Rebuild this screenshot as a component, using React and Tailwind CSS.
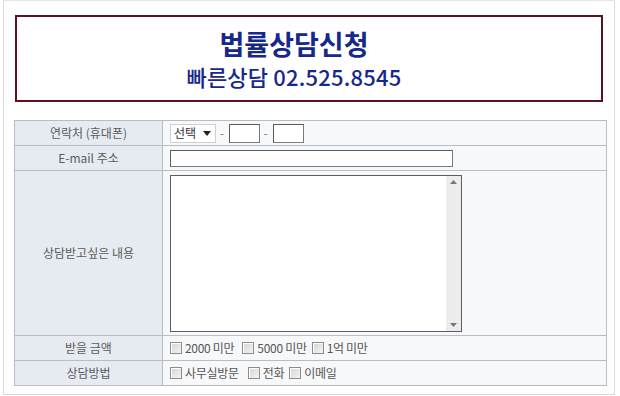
import React from 'react';

const font = { fontFamily: '"Noto Sans CJK KR", "Noto Sans", sans-serif' };

const Check = ({ label, className = '' }) => (
  <label className={`flex items-center gap-[3px] ${className}`}>
    <span className="inline-block w-[12px] h-[12px] border border-[#8c8c8c] bg-gradient-to-br from-[#d4d4d4] to-[#f4f4f4] shadow-[inset_1px_1px_0_#fff]" />
    <span className="text-[12px] text-[#555] leading-none tracking-[-0.3px]">{label}</span>
  </label>
);

const Field = ({ w, h }) => (
  <span
    className={`inline-block ${w} ${h} bg-white border border-[#7a7a7a] border-t-[#5a5a5a] border-l-[#5a5a5a]`}
  />
);

const Label = ({ children }) => (
  <td className="w-[148px] bg-[#e6eaf1] border border-[#b4bdc8] text-center text-[12px] text-[#5c5c5c] align-middle">
    {children}
  </td>
);

export default function App() {
  return (
    <div className="w-[620px] h-[396px] bg-white overflow-hidden" style={font}>
      <div className="ml-[3px] w-[612px] h-[395px] border border-[#dadada] border-t-[#e6e6e6]">
        {/* Header */}
        <div className="ml-[11px] mt-[14px] w-[588px] h-[87px] border-2 border-[#5a1220] flex flex-col items-center justify-center pr-[30px]">
          <div className="text-[27px] font-semibold text-[#17288c] leading-[34px] mt-[1px]">법률상담신청</div>
          <div className="text-[22px] font-medium text-[#17288c] leading-[30px] tracking-[0.2px]">빠른상담 02.525.8545</div>
        </div>

        {/* Form table */}
        <table className="ml-[10px] mt-[18px] w-[593px] border-collapse border border-[#a9b3bf]">
          <tbody>
            <tr className="h-[25px]">
              <Label>연락처 (휴대폰)</Label>
              <td className="bg-[#f7f8fa] border border-[#b4bdc8] pl-[7px]">
                <div className="flex items-center">
                  <div className="w-[46px] h-[19px] bg-white border border-[#cfcfcf] flex items-center justify-between pl-[3px] pr-[4px]">
                    <span className="text-[12px] text-[#333] leading-none">선택</span>
                    <svg width="8" height="5" viewBox="0 0 8 5">
                      <path d="M0 0h8L4 5z" fill="#222" />
                    </svg>
                  </div>
                  <span className="ml-[4px] mr-[5px] text-[11px] text-[#666]">-</span>
                  <Field w="w-[31px]" h="h-[19px]" />
                  <span className="ml-[4px] mr-[5px] text-[11px] text-[#666]">-</span>
                  <Field w="w-[31px]" h="h-[19px]" />
                </div>
              </td>
            </tr>
            <tr className="h-[25px]">
              <Label>E-mail 주소</Label>
              <td className="bg-[#f7f8fa] border border-[#b4bdc8] pl-[7px]">
                <div className="flex items-center">
                  <Field w="w-[283px]" h="h-[17px]" />
                </div>
              </td>
            </tr>
            <tr className="h-[165px]">
              <Label>상담받고싶은 내용</Label>
              <td className="bg-[#f7f8fa] border border-[#b4bdc8] pl-[7px]">
                <div className="w-[292px] h-[157px] bg-white border border-[#5e5e5e] flex justify-end">
                  <div className="w-[15px] h-full bg-[#ececec] flex flex-col items-center justify-between py-[4px]">
                    <svg width="7" height="4" viewBox="0 0 7 4">
                      <path d="M0 4L3.5 0L7 4z" fill="#777" />
                    </svg>
                    <svg width="7" height="4" viewBox="0 0 7 4">
                      <path d="M0 0h7L3.5 4z" fill="#777" />
                    </svg>
                  </div>
                </div>
              </td>
            </tr>
            <tr className="h-[25px]">
              <Label>받을 금액</Label>
              <td className="bg-[#f7f8fa] border border-[#b4bdc8] pl-[7px]">
                <div className="flex items-center">
                  <Check label="2000 미만" className="mr-[8px]" />
                  <Check label="5000 미만" className="mr-[5px]" />
                  <Check label="1억 미만" />
                </div>
              </td>
            </tr>
            <tr className="h-[25px]">
              <Label>상담방법</Label>
              <td className="bg-[#f7f8fa] border border-[#b4bdc8] pl-[7px]">
                <div className="flex items-center">
                  <Check label="사무실방문" className="mr-[9px]" />
                  <Check label="전화" className="mr-[5px]" />
                  <Check label="이메일" />
                </div>
              </td>
            </tr>
          </tbody>
        </table>
      </div>
    </div>
  );
}
